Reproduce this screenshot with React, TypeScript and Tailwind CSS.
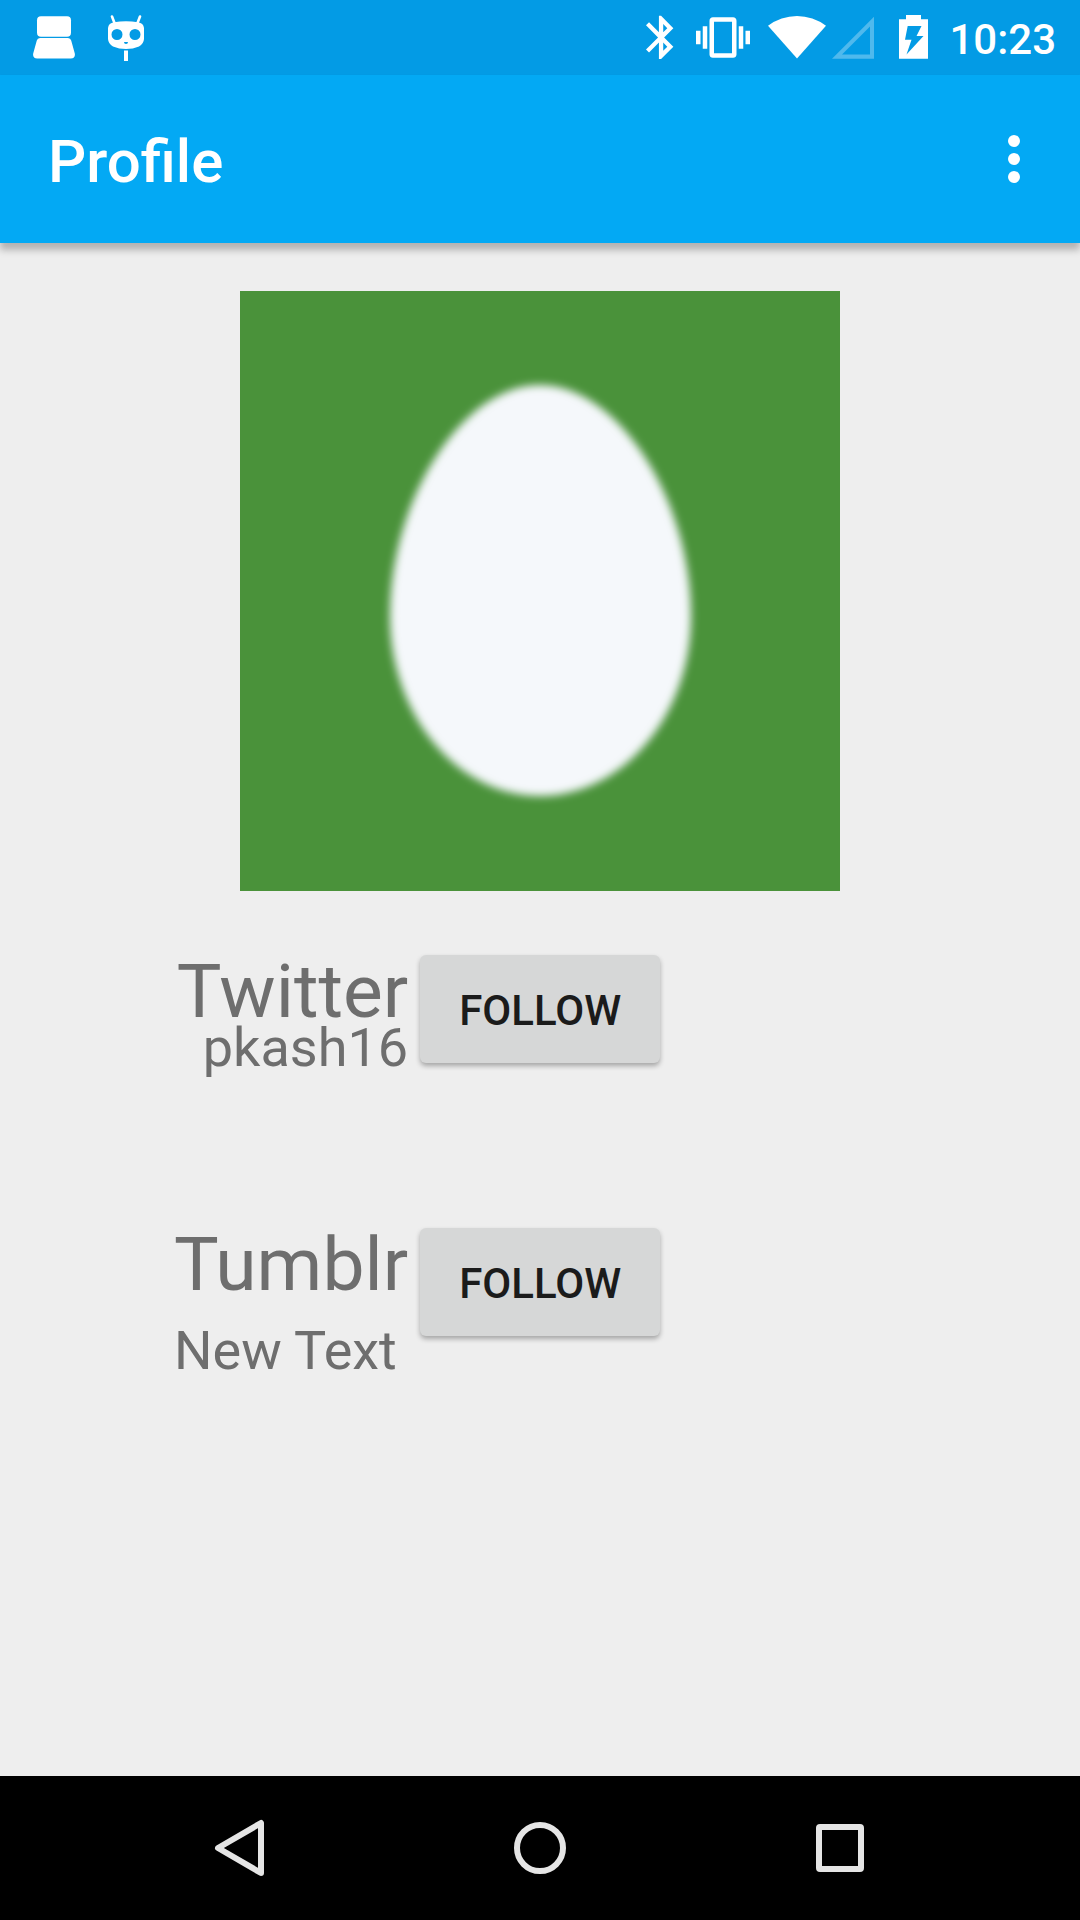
import type { ReactNode } from "react";

type Account = {
  network: string;
  username: string;
  placeholder?: boolean;
};

const accounts: Account[] = [
  { network: "Twitter", username: "pkash16" },
  { network: "Tumblr", username: "New Text", placeholder: true }
];

function StatusBar() {
  return (
    <div className="flex h-[75px] items-start justify-between bg-[#039be5] pl-[33px] pr-6 text-white">
      <div className="flex items-start gap-[33px] pt-[15px]">
        <svg width="42" height="46" viewBox="0 0 42 46" fill="currentColor" aria-hidden="true">
          <rect x="4" y="1.3" width="34" height="20.4" rx="4" />
          <path d="M7 23h28q2.6 0 3.2 2.5l3.6 13q.8 5-4 5H4.200q-4.800 0-4-5l3.600-13Q4.400 23 7 23z" />
        </svg>
        <svg width="36" height="46" viewBox="0 0 36 46" fill="currentColor" aria-hidden="true">
          <path d="M4 1.500 6.500 8M32 1.500 29.500 8" stroke="currentColor" strokeWidth="2.600" strokeLinecap="round" />
          <path
            fillRule="evenodd"
            d="M6 7.200Q18 5.400 30 7.200 35.400 8 36 13v11q-.4 5-5 7.500Q25 34 18 34T5 31.500Q.4 29 0 24V13Q.6 8 6 7.200zM9 14a5.500 5.500 0 1 0 0 11 5.500 5.500 0 0 0 0-11zM27 14a5.500 5.500 0 1 0 0 11 5.500 5.500 0 0 0 0-11zM16 27q0 2 2 2t2-2z"
          />
          <path d="M16 35.500h4V46h-4z" />
        </svg>
      </div>

      <div className="flex items-start pt-[15px]">
        <svg width="28" height="45" viewBox="5 1.600 13 20.900" fill="currentColor" aria-hidden="true">
          <path d="M17.710 7.710 12 2h-1v7.590L6.410 5 5 6.410 10.590 12 5 17.590 6.410 19 11 14.410V22h1l5.710-5.710-4.300-4.290 4.300-4.290zM13 5.830l1.880 1.880L13 9.590V5.830zm1.880 10.460L13 18.170v-3.760l1.880 1.880z" />
        </svg>
        <svg className="ml-[22px]" width="54" height="45" viewBox="0 2 24 20" fill="currentColor" aria-hidden="true">
          <path d="M0 15h2V9H0v6zm3 2h2V7H3v10zm19-8v6h2V9h-2zm-3 8h2V7h-2v10zM16.500 3h-9C6.670 3 6 3.670 6 4.500v15c0 .83.67 1.500 1.500 1.500h9c.83 0 1.500-.67 1.500-1.500v-15c0-.83-.67-1.500-1.500-1.500zM16 19H8V5h8v14z" />
        </svg>
        <svg className="ml-[18px]" width="58" height="45" viewBox="0 -1 58 45" fill="currentColor" aria-hidden="true">
          <path d="M0 9.700A48 48 0 0 1 58 9.700L29 42.500z" />
        </svg>
        <svg className="ml-1.5" width="42" height="45" viewBox="0 0 42 45" fill="currentColor" aria-hidden="true">
          <path fillRule="evenodd" opacity="0.3" d="M42 1.700V43.800H0zM38 11.500 10 39.600H38z" />
        </svg>
        <svg className="ml-[25px]" width="29" height="45" viewBox="0 0 29 45" fill="currentColor" aria-hidden="true">
          <path
            fillRule="evenodd"
            d="M7 0h15v4.200h7v39.500H0V4.200h7zM8.700 11 6 24.800h6.500L7.500 39.500 24.500 21h-7l5-10z"
          />
        </svg>
        <time className="ml-[21px] text-[42px] font-medium leading-[50px]">10:23</time>
      </div>
    </div>
  );
}

function AppBar() {
  return (
    <header className="flex h-[168px] items-center justify-between bg-[#03a9f4] px-12 text-white shadow-[0_7px_7px_rgba(0,0,0,0.25)]">
      <h1 className="pt-1.5 text-[60px] font-medium leading-none">Profile</h1>
      <button type="button" aria-label="More options" className="flex h-24 w-9 flex-col items-center justify-center gap-1.5">
        <span className="size-3 rounded-full bg-white" />
        <span className="size-3 rounded-full bg-white" />
        <span className="size-3 rounded-full bg-white" />
      </button>
    </header>
  );
}

function Avatar() {
  return (
    <svg
      role="img"
      aria-label="Profile picture"
      className="mx-auto size-[600px] max-w-full bg-[#4a923a]"
      viewBox="0 0 600 600"
    >
      <defs>
        <filter id="egg-soft">
          <feGaussianBlur stdDeviation="4" />
        </filter>
      </defs>
      <path
        filter="url(#egg-soft)"
        fill="#f5f8fb"
        d="M300 94C378 94 451 209 451 325C451 425 382 505 300 505S150 425 150 325C150 209 222 94 300 94z"
      />
    </svg>
  );
}

function AccountRow({ account }: { account: Account }) {
  return (
    <>
      <div className={account.placeholder ? "pt-0.5" : "pt-0.5 text-right"}>
        <h2 className="text-[75px] leading-[68px]">{account.network}</h2>
        <p className={account.placeholder ? "mt-[30px] text-[54px] leading-[46px]" : "text-[54px] leading-[46px]"}>
          {account.username}
        </p>
      </div>
      <button
        type="button"
        className="h-[108px] rounded-md bg-[#d6d7d7] px-[39px] pt-0.5 text-[42px] font-medium uppercase text-[#1b1b1b] shadow-[0_3px_5px_rgba(0,0,0,0.3)]"
      >
        Follow
      </button>
    </>
  );
}

function NavButton({ label, children }: { label: string; children: ReactNode }) {
  return (
    <button type="button" aria-label={label} className="flex flex-1 items-center justify-center">
      <svg width="60" height="60" viewBox="0 0 60 60" fill="none" stroke="#e5e5e5" strokeWidth="6" strokeLinejoin="round">
        {children}
      </svg>
    </button>
  );
}

export default function App() {
  return (
    <div className="flex min-h-screen flex-col bg-[#eeeeee] font-[Roboto,sans-serif]">
      <StatusBar />
      <AppBar />
      <main className="flex-1 pt-12">
        <Avatar />
        <div className="mt-16 grid grid-cols-[max-content_max-content] items-start gap-x-3 gap-y-[157px] pl-[174px] text-[#6e6e6e]">
          {accounts.map((account) => (
            <AccountRow key={account.network} account={account} />
          ))}
        </div>
      </main>
      <nav className="flex h-36 bg-black px-[90px]">
        <NavButton label="Back">
          <path d="M51 5v50L8 30z" />
        </NavButton>
        <NavButton label="Home">
          <circle cx="30" cy="30" r="23" />
        </NavButton>
        <NavButton label="Recent apps">
          <rect x="9" y="9" width="42" height="42" rx="1" />
        </NavButton>
      </nav>
    </div>
  );
}
